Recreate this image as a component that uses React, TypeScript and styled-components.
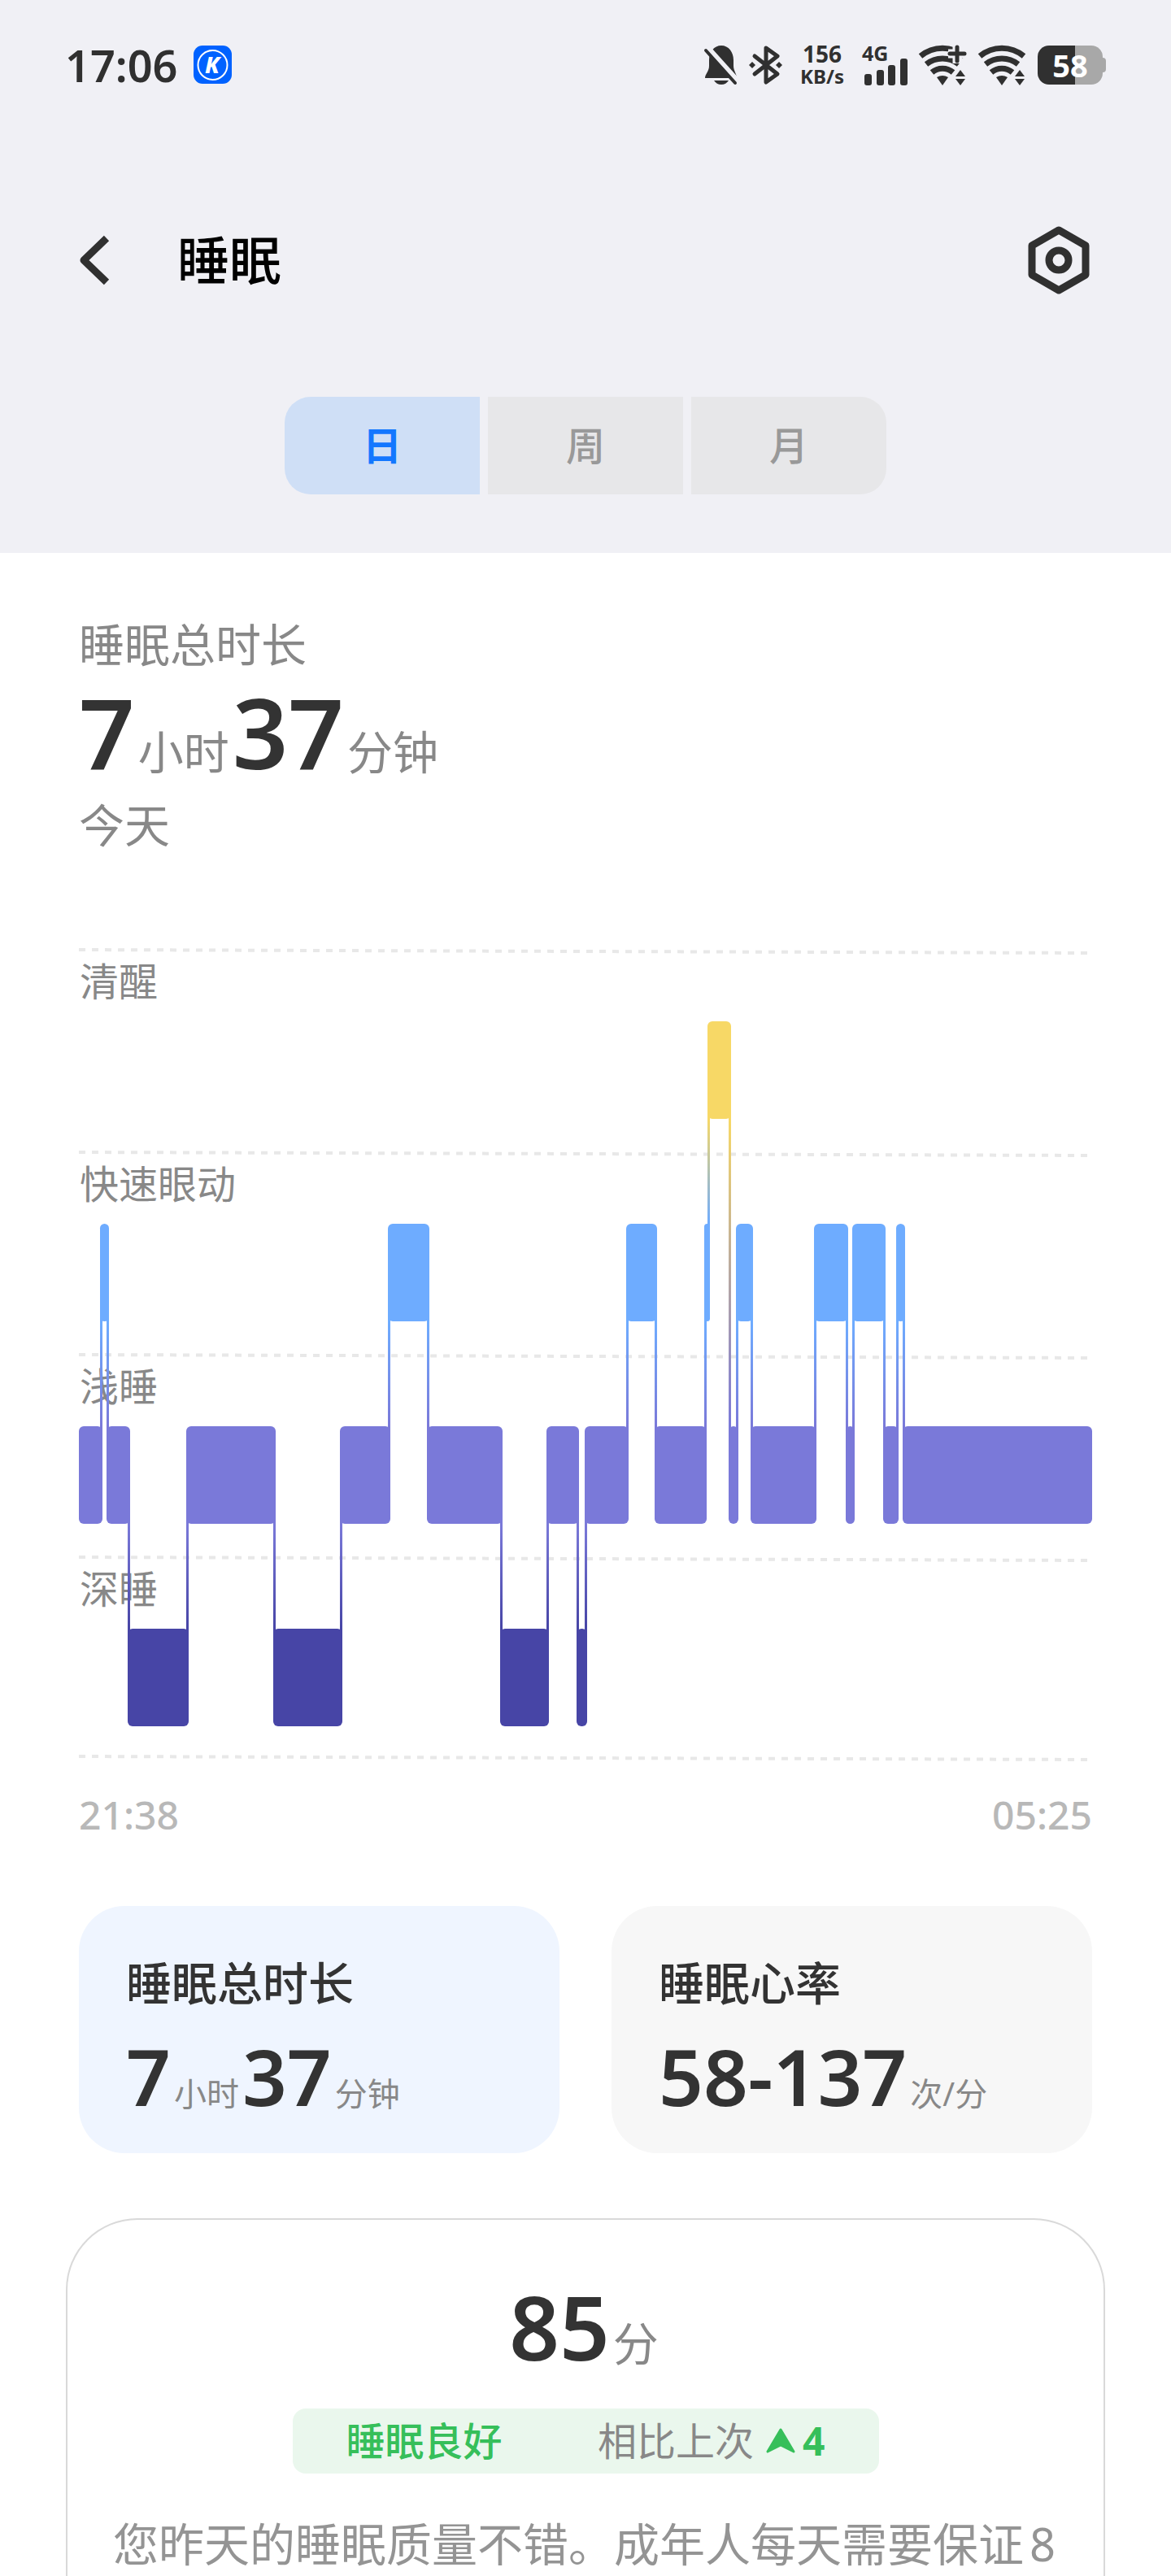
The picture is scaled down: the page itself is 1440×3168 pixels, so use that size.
import React, { useState } from "react";
import styled, { createGlobalStyle } from "styled-components";

const ink = "#303030";
const headerBg = "#f0f0f5";

const GlobalStyle = createGlobalStyle`
  *, *::before, *::after { box-sizing: border-box; }
  body {
    margin: 0;
    background: #fff;
    color: #333;
    font-family: "Noto Sans", "Noto Sans CJK SC", sans-serif;
  }
  h1, h2, p { margin: 0; font-weight: inherit; }
  button { font: inherit; border: 0; padding: 0; background: none; cursor: pointer; }
  svg { display: block; flex: none; overflow: visible; }
`;

const Page = styled.div`
  min-height: 100vh;
  display: flex;
  flex-direction: column;
  overflow: hidden;
`;

const Header = styled.header`
  background: ${headerBg};
  padding: 56px 80px 72px;
`;

const StatusBar = styled.div`
  display: flex;
  align-items: center;
  justify-content: space-between;
  height: 48px;
  color: ${ink};
`;

const StatusGroup = styled.div<{ $gap: number }>`
  display: flex;
  align-items: center;
  gap: ${(p) => p.$gap}px;
`;

const Clock = styled.span`
  font-size: 54px;
  line-height: 48px;
  font-weight: 600;
`;

const NetSpeed = styled.span`
  display: flex;
  flex-direction: column;
  align-items: center;
  margin: 0 8px;
  font-weight: 700;
  font-size: 28px;
  line-height: 28px;
`;

const NetUnit = styled.span`
  font-size: 24px;
`;

const Battery = styled.span`
  display: flex;
  align-items: center;
`;

const BatteryBody = styled.span`
  width: 80px;
  height: 48px;
  border-radius: 14px;
  background: linear-gradient(90deg, ${ink} 57%, #a8a8a8 57%);
  color: #fff;
  font-size: 38px;
  line-height: 48px;
  font-weight: 700;
  text-align: center;
`;

const BatteryTip = styled.span`
  width: 4px;
  height: 18px;
  border-radius: 0 4px 4px 0;
  background: #a8a8a8;
`;

const NavBar = styled.div`
  display: flex;
  align-items: center;
  height: 84px;
  margin-top: 174px;
  padding: 0 20px 0 16px;
`;

const IconButton = styled.button`
  display: flex;
  align-items: center;
  justify-content: center;
`;

const PageTitle = styled.h1`
  flex: 1;
  margin-left: 82px;
  color: #000;
  font-size: 64px;
  line-height: 80px;
  font-weight: 500;
`;

const Tabs = styled.div`
  display: flex;
  justify-content: center;
  gap: 10px;
  margin-top: 126px;
`;

const Tab = styled.button<{ $active: boolean }>`
  width: 240px;
  height: 120px;
  background: ${(p) => (p.$active ? "#cfdff6" : "#e7e7e9")};
  color: ${(p) => (p.$active ? "#1377ff" : "#999")};
  font-size: 48px;
  line-height: 120px;
  font-weight: ${(p) => (p.$active ? 700 : 500)};
  &:first-child { border-radius: 32px 0 0 32px; }
  &:last-child { border-radius: 0 32px 32px 0; }
`;

const Main = styled.main`
  flex: 1;
  display: flex;
  flex-direction: column;
  padding: 80px 97px 0;
`;

const Caption = styled.p`
  color: #888;
  font-size: 56px;
  line-height: 64px;
`;

const Measure = styled.p<{ $size: number; $line: number; $center?: boolean }>`
  display: flex;
  align-items: baseline;
  justify-content: ${(p) => (p.$center ? "center" : "flex-start")};
  font-size: ${(p) => p.$size}px;
  line-height: ${(p) => p.$line}px;
  font-weight: 600;
`;

const Unit = styled.span<{ $size: number }>`
  margin: 0 4px;
  color: #888;
  font-size: ${(p) => p.$size}px;
  line-height: 1;
  font-weight: 400;
`;

const Summary = styled.section`
  display: flex;
  flex-direction: column;
`;

const DayLabel = styled(Caption)`
  margin-top: 6px;
`;

const Chart = styled.svg`
  width: 100%;
  height: auto;
  margin-top: 120px;
`;

const AxisLabel = styled.text`
  fill: #888;
  font-size: 48px;
`;

const TimeRange = styled.div`
  display: flex;
  justify-content: space-between;
  margin-top: 34px;
  color: #b8b8b8;
  font-size: 48px;
  line-height: 64px;
  font-weight: 500;
`;

const Cards = styled.div`
  display: grid;
  grid-template-columns: 1fr 1fr;
  gap: 64px;
  margin-top: 80px;
`;

const Card = styled.section<{ $bg: string }>`
  display: flex;
  flex-direction: column;
  gap: 20px;
  padding: 62px 58px 32px;
  border-radius: 56px;
  background: ${(p) => p.$bg};
`;

const CardTitle = styled.h2`
  font-size: 56px;
  line-height: 64px;
  font-weight: 500;
`;

const ScoreCard = styled.section`
  flex: 1;
  margin: 80px -16px 0;
  padding: 76px 56px 0;
  border: 2px solid #d9d9d9;
  border-bottom: 0;
  border-radius: 88px 88px 0 0;
`;

const Verdict = styled.div`
  display: flex;
  align-items: center;
  justify-content: space-between;
  width: 721px;
  height: 80px;
  margin: 44px auto 0;
  padding: 0 66px;
  border-radius: 16px;
  background: #eaf7ed;
  color: #36bf5a;
  font-size: 48px;
  line-height: 80px;
  font-weight: 500;
`;

const Compare = styled.span`
  display: flex;
  align-items: center;
`;

const CompareLabel = styled.span`
  margin-right: 14px;
  color: #888;
  font-weight: 400;
`;

const CompareValue = styled.span`
  margin-left: 8px;
  font-weight: 700;
`;

const Advice = styled.p`
  margin-top: 46px;
  color: #949494;
  font-size: 56px;
  line-height: 80px;
  text-autospace: normal;
`;

type Stage = "awake" | "rem" | "light" | "deep";

const stages: Record<Stage, { label: string; color: string; top: number }> = {
  awake: { label: "清醒", color: "#f7d866", top: 90 },
  rem: { label: "快速眼动", color: "#6eacff", top: 339 },
  light: { label: "浅睡", color: "#7a79d9", top: 588 },
  deep: { label: "深睡", color: "#4745a6", top: 837 },
};

const order: Stage[] = ["awake", "rem", "light", "deep"];
const BAR = 120;
const LINK = 3;
const CHART_END = 1246;

const segments: [Stage, number][] = [
  ["light", 0], ["rem", 26], ["light", 34], ["deep", 60], ["light", 132],
  ["deep", 239], ["light", 321], ["rem", 380], ["light", 428], ["deep", 518],
  ["light", 575], ["deep", 612], ["light", 622], ["rem", 673], ["light", 708],
  ["rem", 769], ["awake", 773], ["light", 799], ["rem", 808], ["light", 826],
  ["rem", 904], ["light", 943], ["rem", 951], ["light", 989], ["rem", 1005],
  ["light", 1013],
];

function SleepChart() {
  return (
    <Chart viewBox="0 0 1246 1000" role="img" aria-label="睡眠阶段">
      <defs>
        {order.flatMap((a, i) =>
          order.slice(i + 1).map((b) => (
            <linearGradient
              key={a + b}
              id={`${a}-${b}`}
              gradientUnits="userSpaceOnUse"
              x1="0"
              x2="0"
              y1={stages[a].top + BAR}
              y2={stages[b].top}
            >
              <stop offset="0" stopColor={stages[a].color} />
              <stop offset="1" stopColor={stages[b].color} />
            </linearGradient>
          ))
        )}
      </defs>
      {[2, 251, 500, 749, 994].map((y) => (
        <line key={y} x1="0" y1={y} x2="1240" y2={y + 4} stroke="#e8e8e8" strokeWidth="4" strokeDasharray="8 8" />
      ))}
      {order.map((s, i) => (
        <AxisLabel key={s} x="1" y={59 + i * 249}>{stages[s].label}</AxisLabel>
      ))}
      {segments.map(([stage, x], i) => {
        const next = segments[i + 1];
        const end = next ? next[1] + LINK : CHART_END;
        return (
          <rect key={x} x={x} y={stages[stage].top} width={end - x} height={BAR} rx={Math.min(6, (end - x) / 2)} fill={stages[stage].color} />
        );
      })}
      {segments.slice(1).map(([stage, x], i) => {
        const prev = segments[i][0];
        const [upper, lower] = stages[prev].top < stages[stage].top ? [prev, stage] : [stage, prev];
        const top = stages[upper].top + BAR - 6;
        return (
          <rect key={x} x={x} y={top} width={LINK} height={stages[lower].top + 6 - top} fill={`url(#${upper}-${lower})`} />
        );
      })}
    </Chart>
  );
}

function AppBadge() {
  return (
    <svg width="47" height="48" viewBox="0 0 47 48" aria-hidden="true">
      <rect width="47" height="47" rx="11" fill="#0062ff" />
      <circle cx="23.5" cy="24" r="18" fill="none" stroke="#fff" strokeWidth="2" />
      <text x="23" y="34" textAnchor="middle" fill="#fff" fontSize="28" fontWeight="800" fontStyle="italic">K</text>
    </svg>
  );
}

function MutedBell() {
  return (
    <svg width="41" height="48" viewBox="0 0 41 48" aria-hidden="true">
      <path d="M21 0C12 0 6 8 6 18v7c0 7-5 10-5 15h39c0-5-4-9-4-15v-7C36 8 30 0 21 0Z" fill={ink} />
      <path d="M12 43h18c-2 3-5 5-9 5s-7-2-9-5Z" fill={ink} />
      <path d="M5 3 41 43" stroke={headerBg} strokeWidth="6" />
      <path d="M2 6 38 46" stroke={ink} strokeWidth="4" strokeLinecap="round" />
    </svg>
  );
}

function BluetoothIcon() {
  return (
    <svg width="41" height="48" viewBox="0 0 41 48" fill="none" aria-hidden="true">
      <path d="M7 13 35 35 21 45V3l14 10L7 35" stroke={ink} strokeWidth="5" strokeLinejoin="round" strokeLinecap="round" />
      <path d="m4 20 4 4-4 4-4-4ZM37 20l4 4-4 4-4-4Z" fill={ink} />
    </svg>
  );
}

function CellSignal() {
  return (
    <svg width="56" height="50" viewBox="0 0 56 50" aria-hidden="true">
      <text x="0" y="20" fontSize="25" fontWeight="700" fill={ink}>4G</text>
      <rect x="3" y="36" width="9" height="14" rx="3" fill={ink} />
      <rect x="18" y="31" width="9" height="19" rx="3" fill={ink} />
      <rect x="32" y="25" width="9" height="25" rx="3" fill={ink} />
      <rect x="47" y="17" width="9" height="33" rx="3" fill={ink} />
    </svg>
  );
}

function WifiIcon({ plus }: { plus?: boolean }) {
  return (
    <svg width="59" height="50" viewBox="0 0 59 50" fill="none" aria-hidden="true">
      <g stroke={ink} strokeWidth="7">
        <path d="M2 14a42 42 0 0 1 54 0" />
        <path d="M9 24a32 32 0 0 1 40 0" />
        <path d="M16 34a20 20 0 0 1 26 0" />
      </g>
      <path d="M22 40a14 14 0 0 1 14 0l-7 10Z" fill={ink} />
      <path d="m51 31 6 8H45ZM51 50l6-8H45Z" fill={ink} />
      {plus && (
        <>
          <path d="M47 0v23M36 11h24" stroke={headerBg} strokeWidth="11" />
          <path d="M47 3v17M38 11h18" stroke={ink} strokeWidth="5" strokeLinecap="round" />
        </>
      )}
    </svg>
  );
}

const tabs = ["日", "周", "月"];

export default function App() {
  const [active, setActive] = useState("日");
  return (
    <Page>
      <GlobalStyle />
      <Header>
        <StatusBar>
          <StatusGroup $gap={20}>
            <Clock>17:06</Clock>
            <AppBadge />
          </StatusGroup>
          <StatusGroup $gap={14}>
            <MutedBell />
            <BluetoothIcon />
            <NetSpeed>
              156
              <NetUnit>KB/s</NetUnit>
            </NetSpeed>
            <CellSignal />
            <WifiIcon plus />
            <WifiIcon />
            <Battery>
              <BatteryBody>58</BatteryBody>
              <BatteryTip />
            </Battery>
          </StatusGroup>
        </StatusBar>
        <NavBar>
          <IconButton aria-label="返回">
            <svg width="40" height="64" viewBox="0 0 40 64" fill="none">
              <path d="M35 5 7 32l28 27" stroke={ink} strokeWidth="9" strokeLinejoin="round" />
            </svg>
          </IconButton>
          <PageTitle>睡眠</PageTitle>
          <IconButton aria-label="设置">
            <svg width="76" height="84" viewBox="0 0 76 84" fill="none">
              <path d="M38 5 71 24v36L38 79 5 60V24Z" stroke={ink} strokeWidth="9" strokeLinejoin="round" />
              <circle cx="38" cy="42" r="12" stroke={ink} strokeWidth="9" />
            </svg>
          </IconButton>
        </NavBar>
        <Tabs role="tablist">
          {tabs.map((t) => (
            <Tab key={t} role="tab" aria-selected={t === active} $active={t === active} onClick={() => setActive(t)}>
              {t}
            </Tab>
          ))}
        </Tabs>
      </Header>
      <Main>
        <Summary>
          <Caption>睡眠总时长</Caption>
          <Measure $size={120} $line={152}>
            7<Unit $size={56}>小时</Unit>37<Unit $size={56}>分钟</Unit>
          </Measure>
          <DayLabel>今天</DayLabel>
        </Summary>
        <SleepChart />
        <TimeRange>
          <span>21:38</span>
          <span>05:25</span>
        </TimeRange>
        <Cards>
          <Card $bg="#eff5ff">
            <CardTitle>睡眠总时长</CardTitle>
            <Measure $size={96} $line={126}>
              7<Unit $size={40}>小时</Unit>37<Unit $size={40}>分钟</Unit>
            </Measure>
          </Card>
          <Card $bg="#f7f7f7">
            <CardTitle>睡眠心率</CardTitle>
            <Measure $size={96} $line={126}>
              58-137<Unit $size={40}>次/分</Unit>
            </Measure>
          </Card>
        </Cards>
        <ScoreCard>
          <Measure $size={108} $line={112} $center>
            85<Unit $size={56}>分</Unit>
          </Measure>
          <Verdict>
            <span>睡眠良好</span>
            <Compare>
              <CompareLabel>相比上次</CompareLabel>
              <svg width="38" height="32" viewBox="0 0 38 32" aria-hidden="true">
                <path d="M19 2 35 29 19 21 3 29Z" fill="#36bf5a" stroke="#36bf5a" strokeWidth="3" strokeLinejoin="round" />
              </svg>
              <CompareValue>4</CompareValue>
            </Compare>
          </Verdict>
          <Advice>您昨天的睡眠质量不错。成年人每天需要保证8</Advice>
        </ScoreCard>
      </Main>
    </Page>
  );
}
